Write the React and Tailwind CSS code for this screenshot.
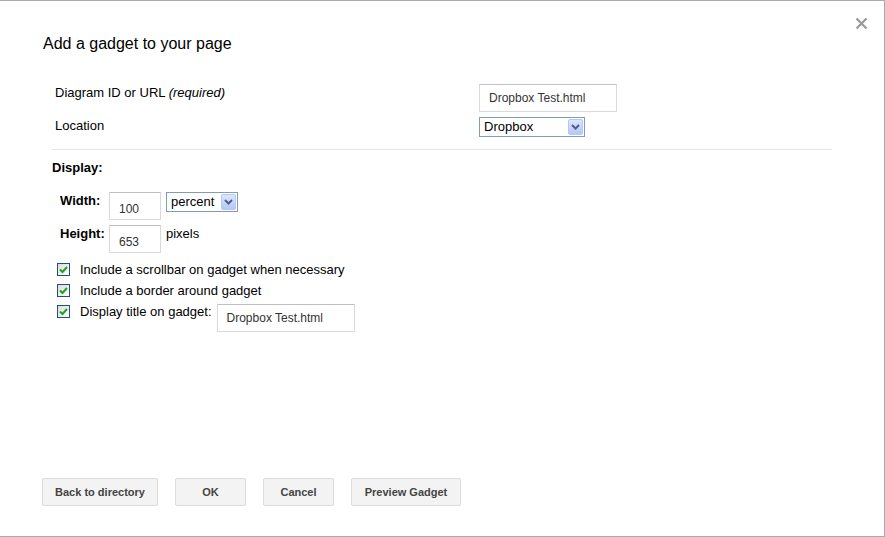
import React from 'react';

// Small chevron used by the old-style select boxes
const SelectArrow = () => (
    <span className="flex h-[16px] w-[15px] items-center justify-center rounded-[2px] border border-[#b5c8f4] bg-gradient-to-b from-[#dbe5fd] to-[#b4c8f8]">
        <svg width="9" height="6" viewBox="0 0 9 6">
            <path d="M1 1 L4.5 4.5 L8 1" fill="none" stroke="#4d6185" strokeWidth="2" />
        </svg>
    </span>
);

const FakeSelect = ({ value, width }) => (
    <div
        className="flex h-[20px] items-center justify-between border border-[#7f9db9] bg-white pl-[4px] pr-[1px] text-[13px] text-black"
        style={{ width }}
    >
        <span className="leading-[16px]">{value}</span>
        <SelectArrow />
    </div>
);

const TextBox = ({ value, className = '' }) => (
    <div className={`flex h-[28px] items-center border border-[#d9d9d9] border-t-[#c0c0c0] bg-white pl-[9px] text-[12px] text-[#333] ${className}`}>
        {value}
    </div>
);

const Check = () => (
    <span className="flex h-[13px] w-[13px] shrink-0 items-center justify-center border border-[#1c5180] bg-gradient-to-br from-[#dcdcd7] to-white">
        <svg width="9" height="8" viewBox="0 0 9 8">
            <path d="M1 3.5 L3.5 6 L8 1" fill="none" stroke="#21a121" strokeWidth="2" />
        </svg>
    </span>
);

const Button = ({ children, width }) => (
    <button
        className="h-[28px] rounded-[2px] border border-[#dcdcdc] bg-[#f3f3f3] text-[11px] font-bold text-[#444]"
        style={{ width }}
    >
        {children}
    </button>
);

export default function App() {
    return (
        <div className="relative flex h-[537px] w-[885px] flex-col border-b border-r border-t border-[#aaaaaa] bg-white font-['Liberation_Sans',Arial,sans-serif] text-[#222]">

            {/* close */}
            <svg className="absolute left-[855px] top-[16px]" width="13" height="13" viewBox="0 0 13 13">
                <path d="M1.5 1.5 L11.5 11.5 M11.5 1.5 L1.5 11.5" stroke="#999" strokeWidth="2.2" />
            </svg>

            <div className="pl-[43px] pt-[33px] text-[16px] leading-[20px] text-black">
                Add a gadget to your page
            </div>

            {/* source */}
            <div className="mt-[30px] flex pl-[55px] text-[13px] text-black">
                <div className="w-[424px] pt-[1px] leading-[16px]">
                    Diagram ID or URL <i>(required)</i>
                </div>
                <TextBox value="Dropbox Test.html" className="w-[138px]" />
            </div>
            <div className="mt-[5px] flex pl-[55px] text-[13px] text-black">
                <div className="w-[424px] pt-[1px] leading-[16px]">Location</div>
                <FakeSelect value="Dropbox" width={106} />
            </div>

            <div className="ml-[52px] mt-[12px] h-px w-[780px] bg-[#e5e5e5]" />

            {/* display options */}
            <div className="ml-[52px] mt-[10px] text-[13px] font-bold leading-[16px] text-black">Display:</div>

            <div className="ml-[60px] mt-[16px] flex text-[13px] text-black">
                <div className="w-[49px] pt-[1px] font-bold leading-[16px]">Width:</div>
                <TextBox value="100" className="w-[52px] pt-[5px]" />
                <div className="ml-[5px]">
                    <FakeSelect value="percent" width={72} />
                </div>
            </div>
            <div className="ml-[60px] mt-[5px] flex text-[13px] text-black">
                <div className="w-[49px] pt-[1px] font-bold leading-[16px]">Height:</div>
                <TextBox value="653" className="w-[52px] pt-[5px]" />
                <div className="ml-[5px] pt-[1px] leading-[16px]">pixels</div>
            </div>

            <div className="ml-[57px] mt-[10px] flex flex-col gap-[8px] text-[13px] text-black">
                <div className="flex items-center">
                    <Check />
                    <span className="ml-[10px] leading-[13px]">Include a scrollbar on gadget when necessary</span>
                </div>
                <div className="flex items-center">
                    <Check />
                    <span className="ml-[10px] leading-[13px]">Include a border around gadget</span>
                </div>
                <div className="flex items-start">
                    <Check />
                    <span className="ml-[10px] leading-[13px]">Display title on gadget:</span>
                    <TextBox value="Dropbox Test.html" className="ml-[5px] -mt-[1px] w-[138px]" />
                </div>
            </div>

            {/* footer buttons */}
            <div className="mb-[30px] ml-[42px] mt-auto flex gap-[17px]">
                <Button width={116}>Back to directory</Button>
                <Button width={71}>OK</Button>
                <Button width={71}>Cancel</Button>
                <Button width={110}>Preview Gadget</Button>
            </div>
        </div>
    );
}
